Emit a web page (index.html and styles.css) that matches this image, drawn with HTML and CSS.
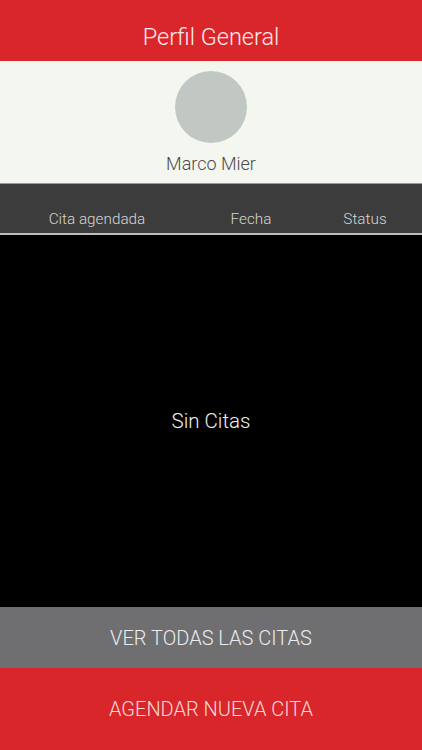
FILE: index.html
```html
<!DOCTYPE html>
<html lang="es">
<head>
  <meta charset="UTF-8" />
  <meta name="viewport" content="width=device-width, initial-scale=1.0"/>
  <title>Perfil General</title>
  <link rel="stylesheet" href="styles.css">
</head>
<body>
  <div class="app">
    <header class="topbar">Perfil General</header>

    <section class="profile">
      <div class="avatar"></div>
      <div class="name">Marco Mier</div>
    </section>

    <div class="table-head">
      <span>Cita agendada</span>
      <span>Fecha</span>
      <span>Status</span>
    </div>

    <main class="list">
      <p class="empty">Sin Citas</p>
    </main>

    <button class="btn btn-gray">Ver todas las citas</button>
    <button class="btn btn-red">Agendar nueva cita</button>
  </div>
</body>
</html>
```

FILE: styles.css
```css
body {
  margin: 0;
  font-family: Roboto, "Liberation Sans", sans-serif;
  font-weight: 300;
  background: #000;
}
.app {
  width: 422px;
  height: 750px;
  display: flex;
  flex-direction: column;
}
.topbar {
  height: 61px;
  box-sizing: border-box;
  padding-top: 13px;
  display: flex;
  align-items: center;
  justify-content: center;
  background-color: #d9262a;
  color: #fbeaea;
  font-size: 23.5px;
}
.profile {
  height: 123px;
  box-sizing: border-box;
  padding-top: 10px;
  background-color: #f4f6f0;
  border-bottom: 1px solid #9a9a9a;
  display: flex;
  flex-direction: column;
  align-items: center;
}
.avatar {
  width: 72px;
  height: 72px;
  border-radius: 50%;
  background-color: #c1c8c3;
}
.name {
  margin-top: 10px;
  font-size: 18px;
  line-height: 22px;
  color: #4a4a4a;
}
.table-head {
  height: 51px;
  box-sizing: border-box;
  padding-top: 26px;
  background-color: #3c3c3c;
  border-bottom: 2px solid #bdbdbd;
  display: grid;
  grid-template-columns: 194px 114px 1fr;
  text-align: center;
  font-size: 15.3px;
  line-height: 18px;
  color: #d6d6d6;
}
.list {
  flex: 1;
  background-color: #000;
  display: flex;
  align-items: center;
  justify-content: center;
}
.empty {
  margin: 0;
  color: #f2f2f2;
  font-size: 20.5px;
}
.btn {
  border: none;
  margin: 0;
  width: 100%;
  font-family: inherit;
  font-weight: 300;
  font-size: 20px;
  text-transform: uppercase;
  cursor: pointer;
}
.btn-gray {
  height: 61px;
  background-color: #6f6f71;
  color: #ececec;
}
.btn-red {
  height: 82px;
  background-color: #d9262a;
  color: #f8dada;
}
```
